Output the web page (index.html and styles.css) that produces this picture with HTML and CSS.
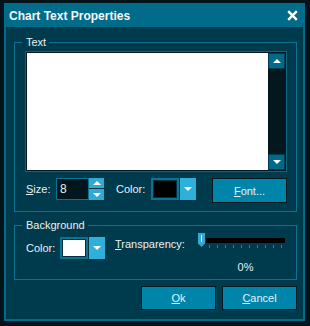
FILE: index.html
```html
<!DOCTYPE html>
<html lang="en">
<head>
    <meta charset="UTF-8">
    <meta name="viewport" content="width=device-width, initial-scale=1.0">
    <title>Chart Text Properties</title>
    <link rel="stylesheet" href="styles.css">
</head>
<body>
    <div class="window">
        <div class="titlebar">
            <span class="title">Chart Text Properties</span>
            <svg class="close" width="11" height="11" viewBox="0 0 11 11">
                <path d="M1.2 1.2 L9.8 9.8 M9.8 1.2 L1.2 9.8" stroke="#fff" stroke-width="2.4" fill="none"/>
            </svg>
        </div>
        <div class="content">
            <fieldset class="group text-group">
                <legend>Text</legend>
                <div class="editor">
                    <div class="editor-area"></div>
                    <div class="scrollbar">
                        <div class="scroll-btn"><span class="arrow up"></span></div>
                        <div class="scroll-track"></div>
                        <div class="scroll-btn"><span class="arrow down"></span></div>
                    </div>
                </div>
                <div class="size-row">
                    <label class="lbl size-lbl"><u>S</u>ize:</label>
                    <div class="num-input">8</div>
                    <div class="spinner">
                        <div class="spin-btn"><span class="arrow up"></span></div>
                        <div class="spin-btn"><span class="arrow down"></span></div>
                    </div>
                    <label class="lbl color-lbl">Color:</label>
                    <div class="swatch"><div class="swatch-fill black"></div></div>
                    <div class="drop"><span class="arrow down"></span></div>
                    <button class="btn font-btn" type="button"><u>F</u>ont...</button>
                </div>
            </fieldset>

            <fieldset class="group bg-group">
                <legend>Background</legend>
                <div class="bg-row">
                    <label class="lbl bg-color-lbl">Color:</label>
                    <div class="swatch"><div class="swatch-fill white"></div></div>
                    <div class="drop"><span class="arrow down"></span></div>
                    <div class="transp">
                        <div class="transp-row">
                            <label class="lbl transp-lbl"><u>T</u>ransparency:</label>
                            <div class="slider">
                                <div class="thumb"></div>
                                <div class="track-wrap">
                                    <div class="track"></div>
                                    <div class="ticks">
                                        <span></span><span></span><span></span><span></span><span></span>
                                        <span></span><span></span><span></span><span></span><span></span>
                                    </div>
                                </div>
                            </div>
                        </div>
                        <div class="percent">0%</div>
                    </div>
                </div>
            </fieldset>

            <div class="actions">
                <button class="btn" type="button"><u>O</u>k</button>
                <button class="btn" type="button"><u>C</u>ancel</button>
            </div>
        </div>
    </div>
</body>
</html>
```

FILE: styles.css
```css
body {
    margin: 0;
    background-color: #021419;
    font-family: "Liberation Sans", Arial, sans-serif;
    font-size: 11px;
    color: #e8f1f3;
}
.window {
    margin: 3px 0 0 4px;
    width: 301px;
    height: 318px;
    box-sizing: border-box;
    background-color: #006c8a;
    padding: 0 2px 2px 2px;
    display: flex;
    flex-direction: column;
}
.titlebar {
    height: 24px;
    flex-shrink: 0;
    display: flex;
    align-items: center;
    justify-content: space-between;
    padding: 0 5px 0 3px;
}
.title {
    font-size: 12px;
    font-weight: bold;
    color: #f4f8f9;
    padding-top: 1px;
}
.close {
    display: block;
    margin-top: 1px;
}
.content {
    flex: 1;
    background-color: #003a4d;
    padding: 0 6px 0 8px;
}
.group {
    margin: 0;
    border: 1px solid #0a7391;
    min-width: 0;
}
.group legend {
    margin-left: -3px;
    padding: 0 3px 0 4px;
    line-height: 14px;
    font-size: 11px;
    color: #e8f1f3;
}
.text-group {
    margin-top: 8px;
    padding: 2px 9px 8px 10px;
}
.bg-group {
    margin-top: 6px;
    padding: 1px 9px 5px 10px;
}
.lbl {
    line-height: 22px;
    white-space: nowrap;
}
u {
    text-underline-offset: 1px;
}

/* text editor box */
.editor {
    display: flex;
    height: 121px;
    border: 1px solid #0a6683;
    box-sizing: border-box;
}
.editor-area {
    flex: 1;
    background-color: #fff;
    border: 1px solid #011820;
    border-right: none;
}
.scrollbar {
    width: 17px;
    background-color: #02171e;
    border: 1px solid #011820;
    border-left: none;
    display: flex;
    flex-direction: column;
}
.scroll-btn {
    height: 16px;
    box-sizing: border-box;
    background-color: #006a88;
    border: 1px solid #013a4c;
    display: flex;
    align-items: center;
    justify-content: center;
}
.scroll-track {
    flex: 1;
}
.arrow {
    width: 0;
    height: 0;
    border-left: 4px solid transparent;
    border-right: 4px solid transparent;
}
.arrow.up {
    border-bottom: 4px solid #fff;
}
.arrow.down {
    border-top: 4px solid #fff;
}

/* size / color / font row */
.size-row {
    display: flex;
    align-items: flex-start;
    margin-top: 6px;
}
.size-lbl {
    width: 30px;
    padding-left: 1px;
}
.num-input {
    width: 33px;
    height: 22px;
    box-sizing: border-box;
    background-color: #02161d;
    border: 1px solid #0a7391;
    padding-left: 3px;
    line-height: 20px;
    font-size: 12px;
}
.spinner {
    width: 15px;
    height: 22px;
    display: flex;
    flex-direction: column;
    justify-content: space-between;
}
.spin-btn {
    background-color: #33a9d2;
    display: flex;
    align-items: center;
    justify-content: center;
}
.spin-btn:first-child {
    height: 10px;
}
.spin-btn:last-child {
    height: 11px;
}
.color-lbl {
    margin-left: 12px;
    width: 35px;
}
.swatch {
    width: 29px;
    height: 22px;
    box-sizing: border-box;
    background-color: #0a7391;
    padding: 2px;
    border-right: 1px solid #013140;
}
.swatch-fill {
    height: 100%;
    box-sizing: border-box;
    border: 1px solid #013140;
}
.swatch-fill.black {
    background-color: #000;
}
.swatch-fill.white {
    background-color: #fff;
}
.drop {
    width: 16px;
    height: 22px;
    background-color: #2fb0da;
    display: flex;
    align-items: center;
    justify-content: center;
}
.btn {
    width: 75px;
    height: 24px;
    background-color: #0085aa;
    border: 1px solid #011a22;
    color: #e8f1f3;
    font-family: "Liberation Sans", Arial, sans-serif;
    font-size: 11px;
    padding: 0;
}
.font-btn {
    margin-left: 16px;
    height: 25px;
}

/* background row */
.bg-row {
    display: flex;
    align-items: flex-start;
}
.bg-row .lbl.bg-color-lbl {
    width: 34px;
    padding-left: 1px;
    margin-top: 4px;
}
.bg-row .swatch,
.bg-row .drop {
    margin-top: 4px;
}
.transp {
    margin-left: 10px;
    display: flex;
    flex-direction: column;
}
.transp-row {
    display: flex;
}
.transp-lbl {
    width: 83px;
    line-height: 14px;
    margin-top: 4px;
}
.slider {
    position: relative;
    width: 87px;
    height: 15px;
}
.thumb {
    position: absolute;
    left: 0;
    top: 0;
    width: 7px;
    height: 14px;
    background-color: #34a8d0;
    clip-path: polygon(0 0, 100% 0, 100% 75%, 50% 100%, 0 75%);
}
.thumb::after {
    content: "";
    position: absolute;
    left: 3px;
    top: 2px;
    width: 1px;
    height: 7px;
    background-color: #d8eef5;
}
.track-wrap {
    margin-left: 8px;
    padding-top: 5px;
}
.track {
    width: 79px;
    height: 5px;
    background-color: #000;
}
.ticks {
    display: flex;
    gap: 7px;
    padding-left: 3px;
    margin-top: 2px;
}
.ticks span {
    width: 1px;
    height: 3px;
    background-color: #4c7584;
}
.percent {
    margin: 9px 0 0 91px;
    width: 79px;
    text-align: center;
    line-height: 14px;
}

/* bottom buttons */
.actions {
    display: flex;
    justify-content: flex-end;
    gap: 6px;
    margin-top: 6px;
}
```
